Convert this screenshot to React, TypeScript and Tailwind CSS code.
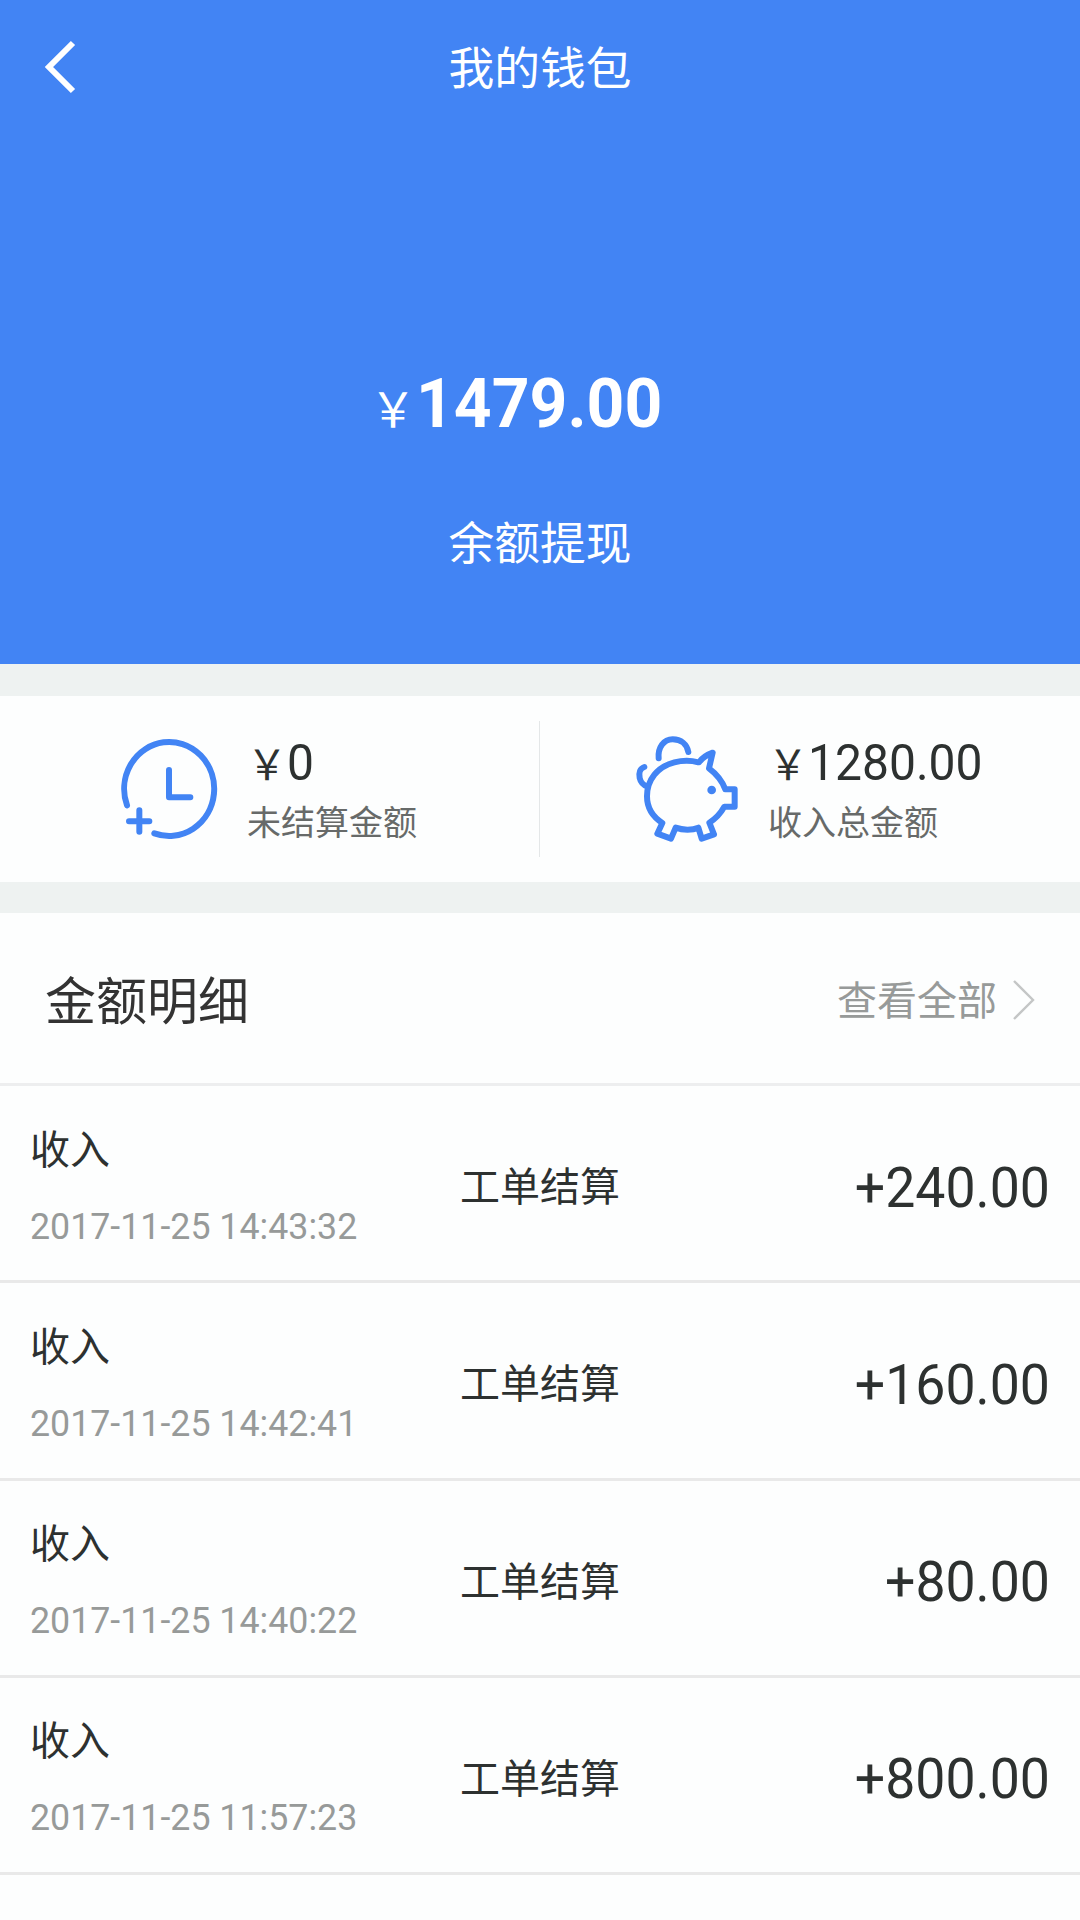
interface Transaction {
  id: number
  type: string
  time: string
  description: string
  amount: string
}

const transactions: Transaction[] = [
  { id: 1, type: '收入', time: '2017-11-25 14:43:32', description: '工单结算', amount: '+240.00' },
  { id: 2, type: '收入', time: '2017-11-25 14:42:41', description: '工单结算', amount: '+160.00' },
  { id: 3, type: '收入', time: '2017-11-25 14:40:22', description: '工单结算', amount: '+80.00' },
  { id: 4, type: '收入', time: '2017-11-25 11:57:23', description: '工单结算', amount: '+800.00' },
]

const BackIcon = () => (
  <svg viewBox="0 0 32 54" className="h-[54px] w-8" fill="none" stroke="currentColor" strokeWidth="6">
    <path d="M29 3 5 27l24 24" />
  </svg>
)

const ChevronIcon = () => (
  <svg viewBox="0 0 24 40" className="h-10 w-6" fill="none" stroke="#c4c6c6" strokeWidth="2.4">
    <path d="M2 1 21 20 2 39" />
  </svg>
)

const ClockIcon = () => (
  <svg
    viewBox="0 0 297 306"
    className="h-[102px] w-[99px]"
    fill="none"
    stroke="#4284f4"
    strokeWidth="18"
    strokeLinecap="round"
    strokeLinejoin="round"
  >
    <path d="M21 202A135 141 0 1 1 103 286" />
    <path d="M147 96v82h64" />
    <path d="M58 217v64M27 250h61" />
  </svg>
)

const PiggyIcon = () => (
  <svg
    viewBox="0 0 312 327"
    className="h-[109px] w-[104px]"
    fill="none"
    stroke="#4284f4"
    strokeWidth="18"
    strokeLinecap="round"
    strokeLinejoin="round"
  >
    <path d="M71 70C68 38 86 13 113 13c25 0 43 15 47 38" />
    <path d="M28 96C15 100 11 114 14 129c3 14 12 22 24 26" />
    <path d="M190 82C172 77 142 76 118 82 68 95 36 134 36 184c0 36 18 62 46 80l-15 32 41 15 14-33c22 8 50 8 68 0l10 33 37-13-14-35c19-12 33-26 45-48h31v-52h-28c-10-27-25-45-49-63l11-47c-19 7-31 15-41 29Z" />
    <circle cx="230" cy="165" r="13" fill="#4284f4" stroke="none" />
  </svg>
)

const TransactionRow = ({ transaction }: { transaction: Transaction }) => (
  <li className="flex h-[197.25px] items-center justify-between border-b-[3px] border-[#e9e9e9] px-[30px] text-[#2d3130]">
    <div className="w-[430px] pt-1.5">
      <p className="text-[40px] leading-[53px]">{transaction.type}</p>
      <p className="mt-[28px] origin-left scale-y-104 font-['Roboto'] text-[35.75px] leading-[50px] text-[#979a99]">
        {transaction.time}
      </p>
    </div>
    <p className="flex-1 pt-[2px] text-[40px] leading-[60px]">{transaction.description}</p>
    <p className="scale-y-104 pt-[9px] font-['Roboto'] text-[53.6px] leading-[64px]">{transaction.amount}</p>
  </li>
)

const App = () => {
  return (
    <div className="flex h-[1920px] w-[1080px] flex-col overflow-hidden bg-[#fdfefe] font-['Noto_Sans_CJK_SC',sans-serif]">
      {/* Balance header */}
      <header className="h-[664px] shrink-0 bg-[#4284f4] text-white">
        <div className="grid h-[134px] grid-cols-3 items-center px-[44px]">
          <button type="button" aria-label="返回" className="justify-self-start">
            <BackIcon />
          </button>
          <h1 className="pb-[5px] text-center text-[45.75px] leading-[60px]">我的钱包</h1>
        </div>
        <div className="mt-[232px] flex origin-bottom scale-y-104 items-baseline pl-[370px] leading-[80px]">
          <span className="text-[46px]">￥</span>
          <span className="font-['Roboto'] text-[66px] font-bold">1479.00</span>
        </div>
        <p className="mt-[62px] text-center text-[45.75px] leading-[60px]">余额提现</p>
      </header>

      {/* Summary figures */}
      <section className="flex h-[249px] shrink-0 items-center border-t-[32px] border-b-[31px] border-[#eef2f1]">
        <div className="flex h-[136px] w-[540px] items-center border-r border-[#e4e7e8] pl-[120px]">
          <ClockIcon />
          <div className="ml-[28px] pt-[2px]">
            <p className="flex scale-y-104 items-baseline leading-[60px] text-[#2d3130]">
              <span className="text-[40px]">￥</span>
              <span className="font-['Roboto'] text-[48px]">0</span>
            </p>
            <p className="text-[34px] leading-[56px] text-[#676a69]">未结算金额</p>
          </div>
        </div>
        <div className="flex h-[136px] items-center pl-[95px]">
          <PiggyIcon />
          <div className="ml-[29px] pt-[2px]">
            <p className="flex scale-y-104 items-baseline leading-[60px] text-[#2d3130]">
              <span className="text-[40px]">￥</span>
              <span className="font-['Roboto'] text-[48px]">1280.00</span>
            </p>
            <p className="text-[34px] leading-[56px] text-[#676a69]">收入总金额</p>
          </div>
        </div>
      </section>

      {/* Transaction list */}
      <section>
        <div className="flex h-[173px] items-center justify-between border-b-[3px] border-[#edeeef] pr-[44px] pl-[45px]">
          <h2 className="text-[51px] leading-[72px] text-[#333333]">金额明细</h2>
          <button type="button" className="flex items-center text-[40px] leading-[60px] text-[#979a99]">
            查看全部
            <span className="ml-[15px] pt-[3px]">
              <ChevronIcon />
            </span>
          </button>
        </div>
        <ul>
          {transactions.map((transaction) => (
            <TransactionRow key={transaction.id} transaction={transaction} />
          ))}
        </ul>
      </section>
    </div>
  )
}

export default App
